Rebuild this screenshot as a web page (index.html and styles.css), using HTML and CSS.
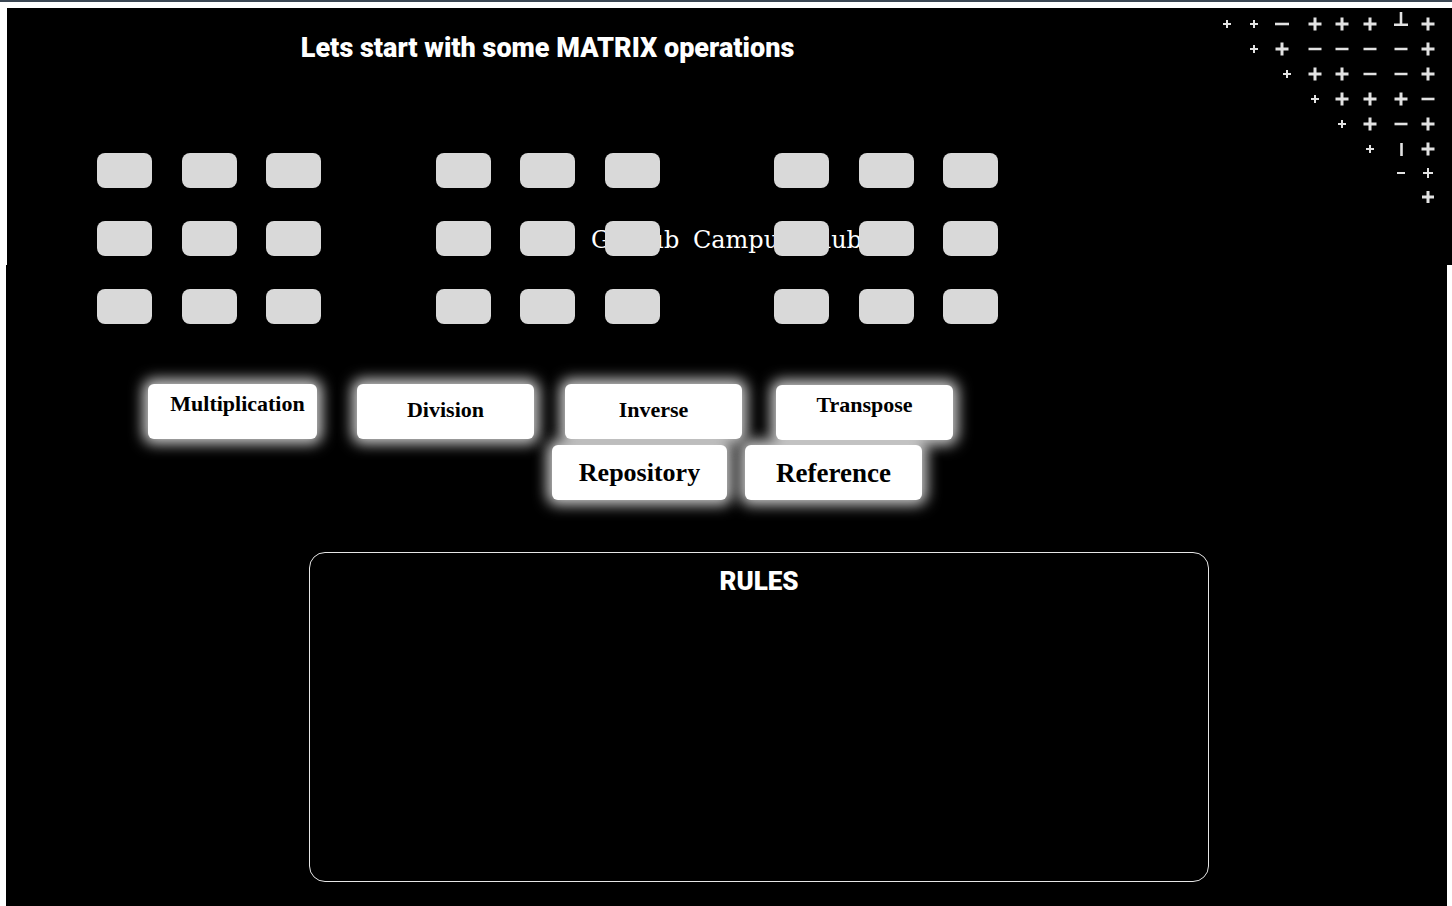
FILE: index.html
```html
<!DOCTYPE html>
<html lang="en">
<head>
<meta charset="utf-8">
<title>Matrix operations</title>
<link rel="stylesheet" href="styles.css">
</head>
<body>
<div class="topbar"></div>
<div class="page">
  <div class="top">
    <div class="left">
      <h1 class="title">Lets start with some MATRIX operations</h1>
      <div class="matrices">
        <div class="matrix">
          <div class="cell"></div><div class="cell"></div><div class="cell"></div>
          <div class="cell"></div><div class="cell"></div><div class="cell"></div>
          <div class="cell"></div><div class="cell"></div><div class="cell"></div>
        </div>
        <div class="matrix">
          <div class="cell"></div><div class="cell"></div><div class="cell"></div>
          <div class="cell"></div><div class="cell"></div><div class="cell"></div>
          <div class="cell"></div><div class="cell"></div><div class="cell"></div>
        </div>
        <div class="matrix">
          <div class="cell"></div><div class="cell"></div><div class="cell"></div>
          <div class="cell"></div><div class="cell"></div><div class="cell"></div>
          <div class="cell"></div><div class="cell"></div><div class="cell"></div>
        </div>
      </div>
    </div>
    <svg class="deco" width="230" height="200" viewBox="0 0 230 200" aria-hidden="true">
      <g fill="none" stroke="#e2e2e2" stroke-linecap="butt">
        <g stroke-width="2">
          <path d="M11 14H19M15 10V18"/>
          <path d="M38 14H46M42 10V18"/>
          <path d="M38 39H46M42 35V43"/>
          <path d="M71 64H79M75 60V68"/>
          <path d="M99 89H107M103 85V93"/>
          <path d="M126 114H134M130 110V118"/>
          <path d="M154 139H162M158 135V143"/>
          <path d="M185 163H193"/>
          <path d="M211 163H221M216 158V168"/>
        </g>
        <g stroke-width="2.6">
          <path d="M63 14H77"/>
          <path d="M96.5 39H109.5M123.5 39H136.5M151.5 39H164.5M182.5 39H195.5"/>
          <path d="M151.5 64H164.5M182.5 64H195.5"/>
          <path d="M209.5 89H222.5"/>
          <path d="M182.5 114H195.5"/>
          <path d="M189 2V15M182 14.7H196"/>
          <path d="M189.5 133V146"/>
        </g>
        <g stroke-width="3">
          <path d="M96.5 14H109.5M103 7.5V20.5"/>
          <path d="M123.5 14H136.5M130 7.5V20.5"/>
          <path d="M151.5 14H164.5M158 7.5V20.5"/>
          <path d="M209.5 14H222.5M216 7.5V20.5"/>
          <path d="M63.5 39H76.5M70 32.5V45.5"/>
          <path d="M209.5 39H222.5M216 32.5V45.5"/>
          <path d="M96.5 64H109.5M103 57.5V70.5"/>
          <path d="M123.5 64H136.5M130 57.5V70.5"/>
          <path d="M209.5 64H222.5M216 57.5V70.5"/>
          <path d="M123.5 89H136.5M130 82.5V95.5"/>
          <path d="M151.5 89H164.5M158 82.5V95.5"/>
          <path d="M182.5 89H195.5M189 82.5V95.5"/>
          <path d="M151.5 114H164.5M158 107.5V120.5"/>
          <path d="M209.5 114H222.5M216 107.5V120.5"/>
          <path d="M209.5 139H222.5M216 132.5V145.5"/>
          <path d="M210 187H222M216 181V193"/>
        </g>
      </g>
    </svg>
  </div>
  <p class="club">GitHub Campus Club</p>
  <div class="ops">
    <button class="op op-high op-mult">Multiplication</button>
    <button class="op op-division">Division</button>
    <button class="op op-inverse">Inverse</button>
    <button class="op op-high op-transpose">Transpose</button>
  </div>
  <div class="links">
    <button class="link link-repo">Repository</button>
    <button class="link">Reference</button>
  </div>
  <section class="rules">
    <h2 class="rules-title">RULES</h2>
  </section>
</div>
</body>
</html>
```

FILE: styles.css
```css
html, body {
  margin: 0;
  padding: 0;
  background: #ffffff;
}

body {
  height: 906px;
  overflow: hidden;
}

.topbar {
  height: 2px;
  background: #3b4754;
}

.page {
  position: relative;
  margin: 6px 5px 0 6px;
  height: 898px;
  background: #000000;
}

.page::before {
  content: "";
  position: absolute;
  left: 0;
  top: 0;
  width: 1px;
  height: 257px;
  background: #ffffff;
}

.page::after {
  content: "";
  position: absolute;
  right: -5px;
  top: 0;
  width: 5px;
  height: 257px;
  background: #000000;
}

.top {
  display: flex;
  align-items: flex-start;
}

.left {
  width: 1083px;
  flex: none;
}

.title {
  margin: 25px 0 0;
  font-family: Roboto, "Liberation Sans", sans-serif;
  font-weight: 900;
  font-size: 27px;
  line-height: 30px;
  letter-spacing: 0;
  color: #ffffff;
  text-align: center;
}

.matrices {
  display: flex;
  justify-content: center;
  gap: 114.5px;
  margin-top: 90px;
}

.matrix {
  position: relative;
  z-index: 1;
  display: grid;
  grid-template-columns: repeat(3, 55px);
  grid-auto-rows: 35px;
  column-gap: 29.5px;
  row-gap: 33px;
}

.cell {
  background: #d9d9d9;
  border-radius: 8px;
}

.deco {
  display: block;
  flex: none;
  margin-left: 123px;
  margin-top: 2px;
}

.club {
  position: absolute;
  z-index: 0;
  left: 0;
  right: 0;
  top: 217px;
  margin: 0;
  font-family: "DejaVu Serif", "Liberation Serif", serif;
  font-size: 24px;
  line-height: 30px;
  word-spacing: 6px;
  color: #ffffff;
  text-align: center;
}

.ops {
  display: flex;
  margin-top: 60px;
  padding-left: 142px;
}

.op, .link {
  height: 55px;
  padding: 0;
  border: none;
  border-radius: 6px;
  background: #ffffff;
  box-shadow: 0 0 14px 5px rgba(255, 255, 255, 0.8);
  color: #000000;
  font-family: "Liberation Serif", "DejaVu Serif", serif;
  font-weight: 700;
}

.op {
  width: 177px;
  font-size: 22px;
  padding-bottom: 4px;
}

.op-high {
  padding-bottom: 16px;
}

.op-mult {
  width: 169px;
  padding-left: 10px;
}

.op-division {
  margin-left: 40px;
}

.op-inverse {
  margin-left: 31px;
}

.op-transpose {
  margin-left: 34px;
  margin-top: 1px;
}

.links {
  display: flex;
  gap: 18px;
  margin-top: 5px;
  padding-left: 546px;
}

.link {
  width: 177px;
  font-size: 27px;
  padding-top: 1px;
}

.link-repo {
  width: 175px;
  font-size: 26px;
}

.rules {
  box-sizing: border-box;
  width: 900px;
  height: 330px;
  margin: 52px 0 0 303px;
  border: 1px solid #e6e6e6;
  border-radius: 16px;
}

.rules-title {
  margin: 13px 0 0;
  font-family: Roboto, "Liberation Sans", sans-serif;
  font-weight: 900;
  font-size: 26px;
  line-height: 30px;
  letter-spacing: 0;
  color: #ffffff;
  text-align: center;
}
```
